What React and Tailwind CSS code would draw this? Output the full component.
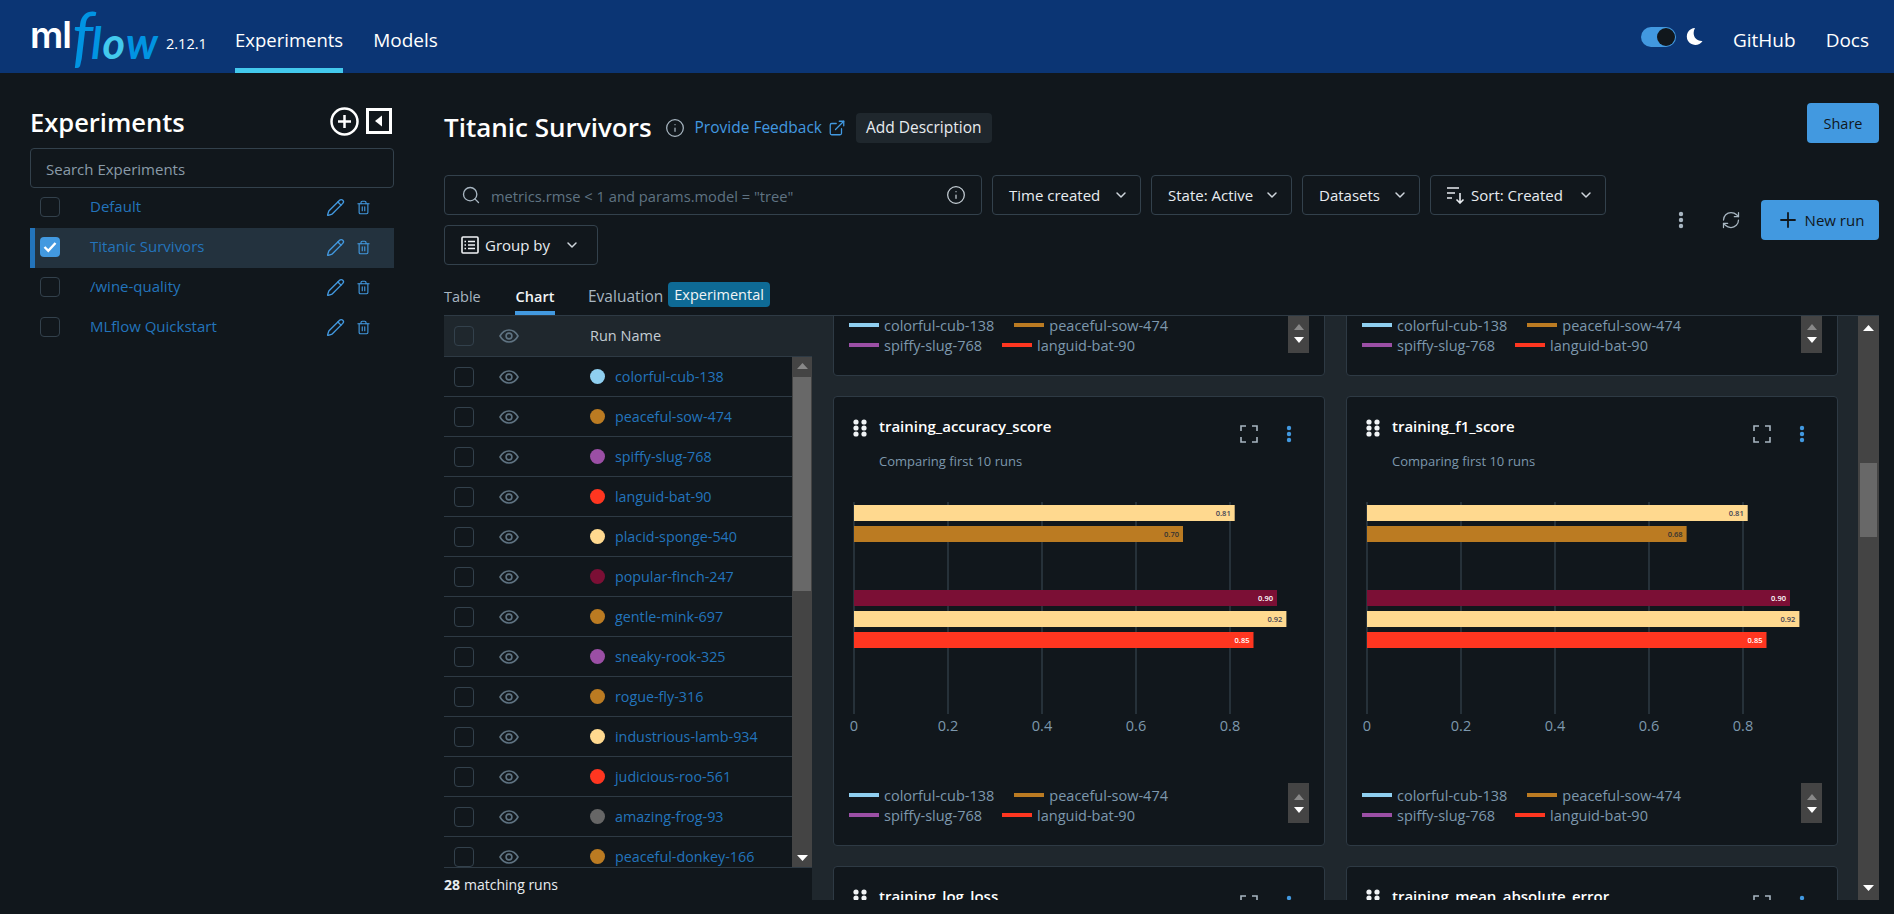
import React from 'react';
import { Search, Info, ExternalLink, ChevronDown, Pencil, Trash2, Plus, RefreshCw } from 'lucide-react';

const C = { blue: '#8FCFF0', brown: '#BB7B22', purple: '#9B4FA5', red: '#FF3620', cream: '#FFD98F', maroon: '#7B0F35', grey: '#666666' };
const runs = [
  ['colorful-cub-138', C.blue], ['peaceful-sow-474', C.brown], ['spiffy-slug-768', C.purple], ['languid-bat-90', C.red],
  ['placid-sponge-540', C.cream], ['popular-finch-247', C.maroon], ['gentle-mink-697', C.brown], ['sneaky-rook-325', C.purple],
  ['rogue-fly-316', C.brown], ['industrious-lamb-934', C.cream], ['judicious-roo-561', C.red], ['amazing-frog-93', C.grey], ['peaceful-donkey-166', C.brown],
];

function Eye() {
  return (
    <svg width="20" height="20" viewBox="0 0 20 20" fill="none" stroke="#5F7382" strokeWidth="1.6">
      <path d="M1 10c2.2-4 5.2-6 9-6s6.800 2 9 6c-2.200 4-5.200 6-9 6s-6.800-2-9-6z" />
      <circle cx="10" cy="10" r="2.900" />
    </svg>
  );
}
function Check({ on }) {
  if (on) return (
    <div className="w-5 h-5 rounded-[4px] bg-[#4299E0] flex items-center justify-center">
      <svg width="14" height="12" viewBox="0 0 14 12" fill="none" stroke="#fff" strokeWidth="2.400"><path d="M1.500 6l3.800 3.800L12.500 2" /></svg>
    </div>
  );
  return <div className="w-5 h-5 rounded-[4px] border border-[#33414C]" />;
}
function Dots({ color, size = 3.300, gap = 6 }) {
  return (
    <svg width="8" height="18" viewBox="0 0 8 18" fill={color}>
      <circle cx="4" cy={9 - gap} r={size} /><circle cx="4" cy="9" r={size} /><circle cx="4" cy={9 + gap} r={size} />
    </svg>
  );
}
function FilterBtn({ w, children }) {
  return (
    <div className={`h-10 rounded-[4px] border border-[#33414C] flex items-center justify-between pl-[16px] pr-[11px] text-[15px] text-[#E8ECF0] ${w}`}>
      {children}
    </div>
  );
}
function Chev() { return <ChevronDown size={16} strokeWidth={2.200} color="#CFD6DC" />; }

function Legend() {
  const L = ({ c, n, gap }) => (
    <span className={`flex items-center ${gap}`}>
      <span className="w-[30px] h-[4px] mr-[5px] -mt-[3px] shrink-0" style={{ background: c }} />
      <span>{n}</span>
    </span>
  );
  return (
    <div className="flex justify-between pl-[15px] pr-[15px]">
      <div className="flex flex-col text-[14.500px] leading-[20px] text-[#7D98AD] pt-[3px]">
        <div className="flex"><L c={C.blue} n="colorful-cub-138" gap="mr-[20px]" /><L c={C.brown} n="peaceful-sow-474" /></div>
        <div className="flex"><L c={C.purple} n="spiffy-slug-768" gap="mr-[20px]" /><L c={C.red} n="languid-bat-90" /></div>
      </div>
      <div className="w-[21px] h-10 bg-[#444444] flex flex-col items-center justify-center gap-[7px]">
        <svg width="10" height="6" viewBox="0 0 10 6" fill="#888"><path d="M5 0l5 6H0z" /></svg>
        <svg width="10" height="6" viewBox="0 0 10 6" fill="#fff"><path d="M5 6L0 0h10z" /></svg>
      </div>
    </div>
  );
}

function BarChart({ bars }) {
  const x0 = 20, k = 470;
  const ticks = [0, 0.2, 0.4, 0.6, 0.8];
  return (
    <svg width="490" height="240" viewBox="0 0 490 240" className="block" style={{ fontFamily: '"Open Sans", sans-serif' }}>
      {ticks.map((t) => (
        <g key={t}>
          <line x1={x0 + t * k} x2={x0 + t * k} y1="0" y2="212" stroke="#36434E" strokeWidth="1.200" />
          <text x={x0 + t * k} y="229" textAnchor="middle" fontSize="14.500" fill="#7D98AD">{t}</text>
        </g>
      ))}
      {bars.map(([v, y, c, tc]) => (
        <g key={y}>
          <rect x={x0} y={y} width={v * k} height="16" fill={c} />
          <text x={x0 + v * k - 4} y={y + 10.500} textAnchor="end" fontSize="7.500" fontWeight="600" fill={tc}>{v.toFixed(2)}</text>
        </g>
      ))}
    </svg>
  );
}

function Card({ title, bars }) {
  return (
    <div className="h-[450px] rounded-[4px] border border-[#2E3A44] bg-[#11171C] flex flex-col">
      <div className="flex pt-[20px] pl-[19px] pr-[31px] h-[105px]">
        <svg width="14" height="18" viewBox="0 0 14 18" fill="#F1F4F6" className="mt-[2px] mr-[12px] shrink-0">
          {[3, 9, 15].map((y) => (<g key={y}><circle cx="3" cy={y} r="2.600" /><circle cx="11" cy={y} r="2.600" /></g>))}
        </svg>
        <div className="flex-1 -mt-[1px]">
          <div className="text-[15px] leading-[20px] font-semibold text-white">{title}</div>
          <div className="text-[13px] leading-[20px] text-[#7D98AD] mt-[15px]">Comparing first 10 runs</div>
        </div>
        <svg width="18" height="18" viewBox="0 0 18 18" fill="none" stroke="#A8B6C1" strokeWidth="1.600" className="mt-[8px] mr-[27px]">
          <path d="M1 6V1h5M12 1h5v5M17 12v5h-5M6 17H1v-5" />
        </svg>
        <div className="mt-[8px]"><Dots color="#4299E0" size={2.200} gap={6} /></div>
      </div>
      <BarChart bars={bars} />
      <div className="mt-[41px]"><Legend /></div>
    </div>
  );
}

const barsA = [[0.81, 3, C.cream, '#445'], [0.7, 24, C.brown, '#333'], [0.9, 88, C.maroon, '#fff'], [0.92, 109, C.cream, '#445'], [0.85, 130, C.red, '#fff']];
const barsB = [[0.81, 3, C.cream, '#445'], [0.68, 24, C.brown, '#333'], [0.9, 88, C.maroon, '#fff'], [0.92, 109, C.cream, '#445'], [0.85, 130, C.red, '#fff']];

export default function App() {
  const exps = ['Default', 'Titanic Survivors', '/wine-quality', 'MLflow Quickstart'];
  return (
    <div className="h-screen w-full flex flex-col overflow-hidden bg-[#11171C] text-white" style={{ fontFamily: '"Open Sans", sans-serif' }}>
      <header className="h-[73px] shrink-0 bg-[#0B3574] flex items-stretch pl-[30px] pr-[25px]">
        <div className="w-[205px] flex items-center relative shrink-0">
          <span className="text-[37px] font-semibold tracking-[-1px] leading-none -mt-[4px]" style={{ fontFamily: 'Inter, sans-serif' }}>ml</span>
          <span className="italic text-[#0194E2] font-normal leading-none flex items-baseline -mt-[6px] whitespace-nowrap" style={{ fontFamily: 'Lato, sans-serif' }}>
            <span className="text-[66px] ml-[1px] mr-[-2px]">f</span>
            <span className="text-[43px] font-bold tracking-[1px]">l</span>
            <span className="text-[43px] font-bold tracking-[1px] text-[#43C9ED]">o</span>
            <span className="text-[43px] font-bold">w</span>
          </span>
          <span className="text-[14.500px] absolute left-[136px] top-[34px] leading-[20px]">2.12.1</span>
        </div>
        <nav className="flex gap-[30px] text-[18.500px]">
          <div className="border-b-[5px] border-[#43C9ED] flex items-center pt-[12px]">Experiments</div>
          <div className="flex items-center pt-[7px] text-[19px]">Models</div>
        </nav>
        <div className="flex-1" />
        <div className="flex items-center text-[19px]">
          <div className="w-[35px] h-[20px] rounded-full bg-[#4299E0] flex justify-end items-center pr-[1px]">
            <div className="w-[18px] h-[18px] rounded-full bg-[#11171C]" />
          </div>
          <svg width="17" height="19" viewBox="0 0 17 18" fill="#fff" className="ml-[10px] mr-[30px]"><path d="M9 0.500a8.500 8.500 0 1 0 7.500 13C9 14 5.500 7 9 0.500z" /></svg>
          <span className="mr-[30px] pt-[7px]">GitHub</span>
          <span className="pt-[7px]">Docs</span>
        </div>
      </header>

      <div className="flex-1 min-h-0 flex pb-[14px]">
        <aside className="w-[364px] ml-[30px] shrink-0 pt-[27px]">
          <div className="flex items-center justify-between h-[48px]">
            <h1 className="text-[25.500px] font-semibold leading-[32px] text-white -mt-[4px]">Experiments</h1>
            <div className="flex items-center gap-[7px] mr-[2px] -mt-[6px]">
              <svg width="29" height="29" viewBox="0 0 29 29" fill="none" stroke="#fff" strokeWidth="2.500"><circle cx="14.500" cy="14.500" r="13" /><path d="M14.500 8v13M8 14.500h13" /></svg>
              <svg width="26" height="26" viewBox="0 0 26 26" fill="none"><rect x="1.500" y="1.500" width="23" height="23" stroke="#fff" strokeWidth="3" /><path d="M16 7.500v11L9 13z" fill="#fff" /></svg>
            </div>
          </div>
          <div className="h-10 rounded-[4px] border border-[#33414C] flex items-center px-[15px] pt-[3px] text-[15px] text-[#8A9BA8]">Search Experiments</div>
          <div>
            {exps.map((e, i) => (
              <div key={e} className={`h-10 pb-[2px] flex items-center ${i === 1 ? 'bg-[#23323E] border-l-[5px] border-[#2374BB] pl-[5px]' : 'pl-[10px]'}`}>
                <Check on={i === 1} />
                <span className="ml-[30px] text-[15px] text-[#2374BB] flex-1 -mt-[1px]">{e}</span>
                <Pencil size={19} strokeWidth={1.700} color="#4299E0" />
                <Trash2 size={15} strokeWidth={1.800} color="#4299E0" className="ml-[11px] mr-[23px]" />
              </div>
            ))}
          </div>
        </aside>

        <main className="flex-1 min-w-0 ml-[50px] mr-[15px] flex flex-col pt-[30px]">
          <div className="h-10 flex items-start shrink-0">
            <div className="flex items-center mt-[10px]">
              <h2 className="text-[26px] font-semibold text-white leading-[32px] -mt-[2px]">Titanic Survivors</h2>
              <Info size={20} strokeWidth={1.500} color="#A8B6C1" className="ml-[13px]" />
              <span className="ml-[10px] text-[15.500px] text-[#4299E0]">Provide Feedback</span>
              <ExternalLink size={18} strokeWidth={1.700} color="#4299E0" className="ml-[6px]" />
              <div className="ml-[10px] h-[30px] px-[10px] rounded-[4px] bg-[#1F272D] flex items-center text-[15.500px] text-[#E8ECF0]">Add Description</div>
            </div>
            <div className="flex-1" />
            <div className="w-[72px] h-10 rounded-[4px] bg-[#4299E0] flex items-center justify-center pt-[1px] text-[14.500px] text-[#11171C]">Share</div>
          </div>

          <div className="flex items-center justify-between mt-[32px] shrink-0">
            <div className="w-[1170px] flex flex-wrap gap-[10px]">
              <div className="w-[538px] h-10 rounded-[4px] border border-[#33414C] flex items-center pl-[16px] pr-[15px]">
                <Search size={20} strokeWidth={1.600} color="#A8B6C1" />
                <span className="ml-[10px] flex-1 text-[14.700px] text-[#5F7382] pt-[2px]">metrics.rmse &lt; 1 and params.model = "tree"</span>
                <Info size={20} strokeWidth={1.500} color="#C4CDD4" />
              </div>
              <FilterBtn w="w-[149px]"><span className="pt-[1px]">Time created</span> <Chev /></FilterBtn>
              <FilterBtn w="w-[141px]"><span className="pt-[1px]">State: Active</span> <Chev /></FilterBtn>
              <FilterBtn w="w-[118px]"><span className="pt-[1px]">Datasets</span> <Chev /></FilterBtn>
              <FilterBtn w="w-[176px]">
                <svg width="19" height="18" viewBox="0 0 19 18" fill="none" stroke="#E8ECF0" strokeWidth="1.600" className="-ml-[1px] mr-[6px] shrink-0"><path d="M1 2h12M1 7h8M1 12h5M14 7v10M10.500 13.500L14 17l3.500-3.500" /></svg>
                <span className="flex-1 pt-[1px]">Sort: Created</span>
                <Chev />
              </FilterBtn>
              <FilterBtn w="w-[154px]">
                <svg width="18" height="18" viewBox="0 0 18 18" fill="none" stroke="#F1F4F6" strokeWidth="1.600" className="mr-[6px] shrink-0"><rect x="1" y="1" width="16" height="16" rx="1" /><path d="M7 5.500h7M7 9h7M7 12.500h7M3.500 5.500h1.500M3.500 9h1.500M3.500 12.500h1.500" /></svg>
                <span className="flex-1 pt-[1px]">Group by</span>
                <span className="mr-[6px]"><Chev /></span>
              </FilterBtn>
            </div>
            <div className="flex items-center">
              <Dots color="#A8B6C1" size={2.200} gap={6} />
              <RefreshCw size={20} strokeWidth={1.500} color="#A8B6C1" className="ml-[36px] mr-[20px]" />
              <div className="w-[118px] h-10 rounded-[4px] bg-[#4299E0] flex items-center justify-center gap-[5px] text-[15px] text-[#11171C]">
                <Plus size={24} strokeWidth={1.800} color="#11171C" /> New run
              </div>
            </div>
          </div>

          <div className="h-[33px] mt-[17px] flex items-stretch text-[14.500px] shrink-0 mr-[21px]">
            <div className="flex items-center text-[#A8B6C1] pb-[3px] w-[71px]">Table</div>
            <div className="flex items-center font-semibold text-[#F1F4F6] border-b-[4px] border-[#4299E0] w-[40px] justify-center mr-[33px] pt-[1px]">Chart</div>
            <div className="flex items-center text-[#A8B6C1] pb-[3px] text-[15.500px]">Evaluation</div>
            <div className="ml-[5px] h-[25px] px-[6px] rounded-[4px] bg-[#0E6A95] flex items-center text-[#F1F4F6]">Experimental</div>
          </div>

          <div className="flex-1 min-h-0 flex border-t border-[#2E3A44]">
            <section className="w-[368px] shrink-0 flex flex-col min-h-0">
              <div className="h-[41px] shrink-0 bg-[#1F272D] border-b border-[#2E3A44] flex items-center pl-[10px] text-[14.500px] font-normal text-[#C4CDD4]">
                <Check />
                <span className="ml-[25px]"><Eye /></span>
                <span className="ml-[71px]">Run Name</span>
              </div>
              <div className="flex-1 min-h-0 flex">
                <div className="flex-1 min-w-0 overflow-hidden">
                  {runs.map(([n, c]) => (
                    <div key={n} className="h-10 border-b border-[#2E3A44] flex items-center pl-[10px]">
                      <Check />
                      <span className="ml-[25px]"><Eye /></span>
                      <span className="ml-[71px] w-[15px] h-[15px] rounded-full shrink-0" style={{ background: c }} />
                      <span className="ml-[10px] text-[14.300px] text-[#2374BB] whitespace-nowrap">{n}</span>
                    </div>
                  ))}
                </div>
                <div className="w-[20px] shrink-0 bg-[#444444] flex flex-col items-center">
                  <svg width="11" height="6" viewBox="0 0 11 6" fill="#888" className="mt-[6px]"><path d="M5.500 0L11 6H0z" /></svg>
                  <div className="w-[18px] h-[214px] bg-[#686868] mt-[8px]" />
                  <div className="flex-1" />
                  <svg width="11" height="6" viewBox="0 0 11 6" fill="#fff" className="mb-[6px]"><path d="M5.500 6L0 0h11z" /></svg>
                </div>
              </div>
              <div className="h-[33px] shrink-0 border-t border-[#2E3A44] flex items-center text-[14px] text-[#E8ECF0]">
                <span className="font-bold mr-[4px]">28</span> matching runs
              </div>
            </section>

            <section className="flex-1 min-w-0 flex bg-[#1F272D]">
              <div className="flex-1 min-w-0 overflow-hidden pl-[21px] pr-[20px]">
                <div className="grid grid-cols-2 gap-x-[21px] gap-y-[20px] -mt-[390px]">
                  <Card title="training_precision_score" bars={barsA} />
                  <Card title="training_recall_score" bars={barsB} />
                  <Card title="training_accuracy_score" bars={barsA} />
                  <Card title="training_f1_score" bars={barsB} />
                  <Card title="training_log_loss" bars={barsA} />
                  <Card title="training_mean_absolute_error" bars={barsB} />
                </div>
              </div>
              <div className="w-[21px] shrink-0 bg-[#444444] flex flex-col items-center">
                <svg width="11" height="6" viewBox="0 0 11 6" fill="#fff" className="mt-[9px]"><path d="M5.500 0L11 6H0z" /></svg>
                <div className="w-[17px] h-[74px] bg-[#686868] mt-[132px]" />
                <div className="flex-1" />
                <svg width="11" height="6" viewBox="0 0 11 6" fill="#fff" className="mb-[9px]"><path d="M5.500 6L0 0h11z" /></svg>
              </div>
            </section>
          </div>
        </main>
      </div>
    </div>
  );
}
